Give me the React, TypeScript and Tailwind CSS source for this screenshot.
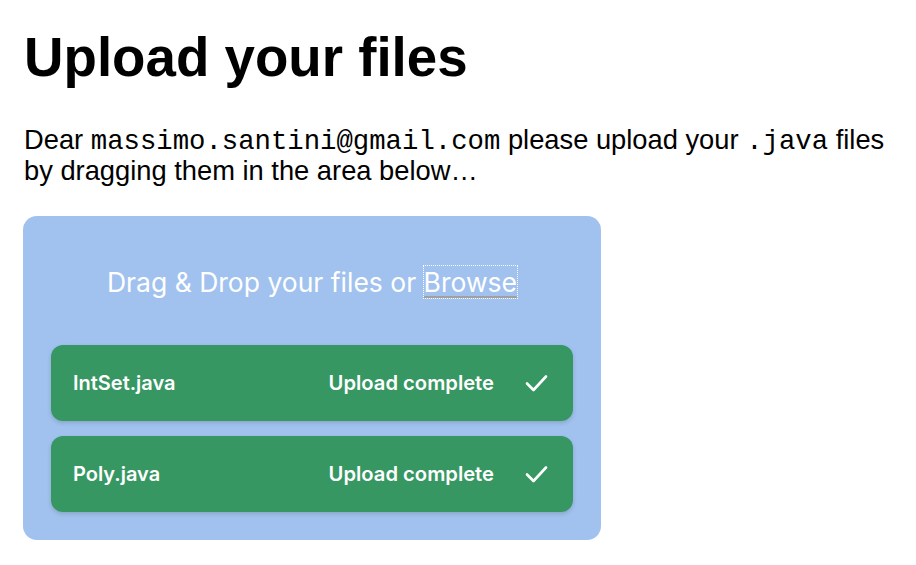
import * as React from "react";

const FILES = ["IntSet.java", "Poly.java"];

function Check() {
  return (
    <svg width="23" height="18" viewBox="0 0 23 18" fill="none" aria-hidden="true">
      <path
        d="M2 9.5 L8.5 16 L21 2.5"
        stroke="white"
        strokeWidth="2.6"
        strokeLinecap="round"
        strokeLinejoin="round"
      />
    </svg>
  );
}

function FileItem({ name }: { name: string }) {
  return (
    <li className="flex h-[76px] items-center justify-between rounded-[12px] bg-[#369763] pl-[22px] pr-[25px] text-white shadow-[0_2px_4px_rgba(0,0,0,0.15)]">
      <span className="text-[20px] font-semibold">{name}</span>
      <span className="flex items-center gap-[31px]">
        <span className="text-[20.2px] font-semibold">Upload complete</span>
        <Check />
      </span>
    </li>
  );
}

export default function App() {
  return (
    <div className="min-h-screen bg-white px-[24px] pt-[26px] text-black [font-family:'Liberation_Sans',Arial,sans-serif]">
      <h1 className="text-[54.7px] font-bold leading-[62px]">Upload your files</h1>
      <p className="mt-[38px] text-[27.3px] leading-[28.5px]">
        Dear{" "}
        <code className="[font-family:'Liberation_Mono',monospace]">massimo.santini@gmail.com</code>{" "}
        please upload your{" "}
        <code className="[font-family:'Liberation_Mono',monospace]">.java</code> files by dragging
        them in the area below…
      </p>
      <div className="mt-[31px] ml-[-1px] w-[578px] rounded-[14px] bg-[#a1c2ee] px-[28px] pb-[28px] pt-[48px] [font-family:Inter,'Noto_Sans',sans-serif]">
        <div className="text-center text-[26.5px] leading-[36px] text-white">
          Drag &amp; Drop your files or{" "}
          <span className="underline decoration-[#a0a0a0] decoration-2 underline-offset-[4px] outline-1 outline-dotted outline-white">
            Browse
          </span>
        </div>
        <ul className="mt-[45px] flex flex-col gap-[15px]">
          {FILES.map((f) => (
            <FileItem key={f} name={f} />
          ))}
        </ul>
      </div>
    </div>
  );
}
